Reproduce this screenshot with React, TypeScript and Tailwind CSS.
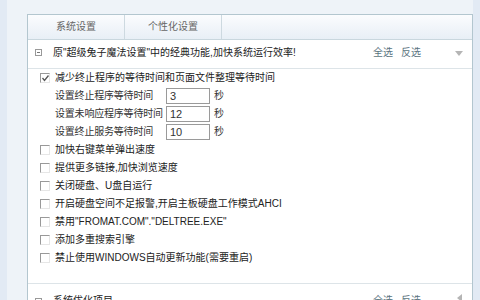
import React from "react";

const font = { fontFamily: '"Liberation Sans", "Noto Sans CJK SC", sans-serif' };

const items = [
  "加快右键菜单弹出速度",
  "提供更多链接,加快浏览速度",
  "关闭硬盘、U盘自运行",
  "开启硬盘空间不足报警,开启主板硬盘工作模式AHCI",
  '禁用"FROMAT.COM"."DELTREE.EXE"',
  "添加多重搜索引擎",
  "禁止使用WINDOWS自动更新功能(需要重启)",
];

const waits = [
  { label: "设置终止程序等待时间", value: "3" },
  { label: "设置未响应程序等待时间", value: "12" },
  { label: "设置终止服务等待时间", value: "10" },
];

function Box({ checked }: { checked?: boolean }) {
  // 旧式凹陷复选框
  return (
    <span className="relative w-[10px] h-[10px] shrink-0 border-t border-l border-t-[#999] border-l-[#999] border-b border-r border-b-[#e6e6e6] border-r-[#e6e6e6] bg-white">
      {checked && (
        <svg className="absolute left-[0px] top-[0px]" width="9" height="9" viewBox="0 0 9 9">
          <path d="M1.5 4 L3.5 6.5 L7.5 1.5" stroke="#555" strokeWidth="1.3" fill="none" />
        </svg>
      )}
    </span>
  );
}

function Links() {
  return (
    <div className="flex gap-[8px] text-[#5b7480]">
      <span>全选</span>
      <span>反选</span>
    </div>
  );
}

export default function App() {
  return (
    <div className="relative w-[480px] h-[300px] overflow-hidden bg-[#eef3f8] flex text-[10px] leading-none" style={font}>
      <div className="w-[7px] bg-[#e2eaf4]" />
      <div className="pl-[20px] pt-[14px]">
        <div className="w-[446px] h-[300px] border border-[#b3c6cf] bg-white flex flex-col">
          {/* tabs */}
          <div className="h-[25px] flex border-b border-[#c9d7de] bg-gradient-to-b from-[#fbfcfe] to-[#e8eff6]">
            <div className="w-[97px] flex items-center justify-center border-r border-[#cdd9e0] text-[#666]">系统设置</div>
            <div className="w-[97px] flex items-center justify-center border-r border-[#cdd9e0] text-[#666]">个性化设置</div>
          </div>

          {/* section header */}
          <div className="h-[29px] flex items-center border-b border-[#dde4e8] pb-[3px]">
            <span className="ml-[7px] w-[7px] h-[7px] border border-[#999] flex items-center justify-center">
              <span className="w-[3px] h-[1px] bg-[#777]" />
            </span>
            <span className="ml-[11px] text-[#222]">原"超级兔子魔法设置"中的经典功能,加快系统运行效率!</span>
            <div className="ml-auto mr-[51px]">
              <Links />
            </div>
          </div>

          {/* list */}
          <div className="flex flex-col pl-[12px] text-[#222] pb-[16px]">
            <div className="h-[18px] flex items-center gap-[5px]">
              <Box checked />
              <span>减少终止程序的等待时间和页面文件整理等待时间</span>
            </div>
            {waits.map((w) => (
              <div key={w.label} className="h-[18px] flex items-center pl-[15px] text-[#333]">
                <span className="w-[111px] tracking-[-0.2px]">{w.label}</span>
                <span className="w-[44px] h-[16px] border border-[#9a9a9a] flex items-center pl-[3px] text-[11px] text-[#333]">{w.value}</span>
                <span className="ml-[4px]">秒</span>
              </div>
            ))}
            {items.map((t) => (
              <div key={t} className="h-[18px] flex items-center gap-[5px]">
                <Box />
                <span>{t}</span>
              </div>
            ))}
          </div>

          {/* second section */}
          <div className="h-[29px] flex items-center border-t border-[#dde4e8] pt-[6px]">
            <span className="ml-[7px] w-[7px] h-[7px] border border-[#999] flex items-center justify-center">
              <span className="w-[3px] h-[1px] bg-[#777]" />
            </span>
            <span className="ml-[11px] text-[#222]">系统优化项目</span>
            <div className="ml-auto mr-[51px]">
              <Links />
            </div>
          </div>
        </div>
      </div>
      <div className="ml-auto w-[7px] bg-[#e2eaf4]" />

      {/* 折叠箭头 */}
      <svg className="absolute left-[455px] top-[51px]" width="8" height="5" viewBox="0 0 8 5">
        <path d="M0 0 L8 0 L4 5 Z" fill="#b5b5b5" />
      </svg>
      <svg className="absolute left-[457px] top-[294px]" width="5" height="8" viewBox="0 0 5 8">
        <path d="M5 0 L5 8 L0 4 Z" fill="#b5b5b5" />
      </svg>
    </div>
  );
}
